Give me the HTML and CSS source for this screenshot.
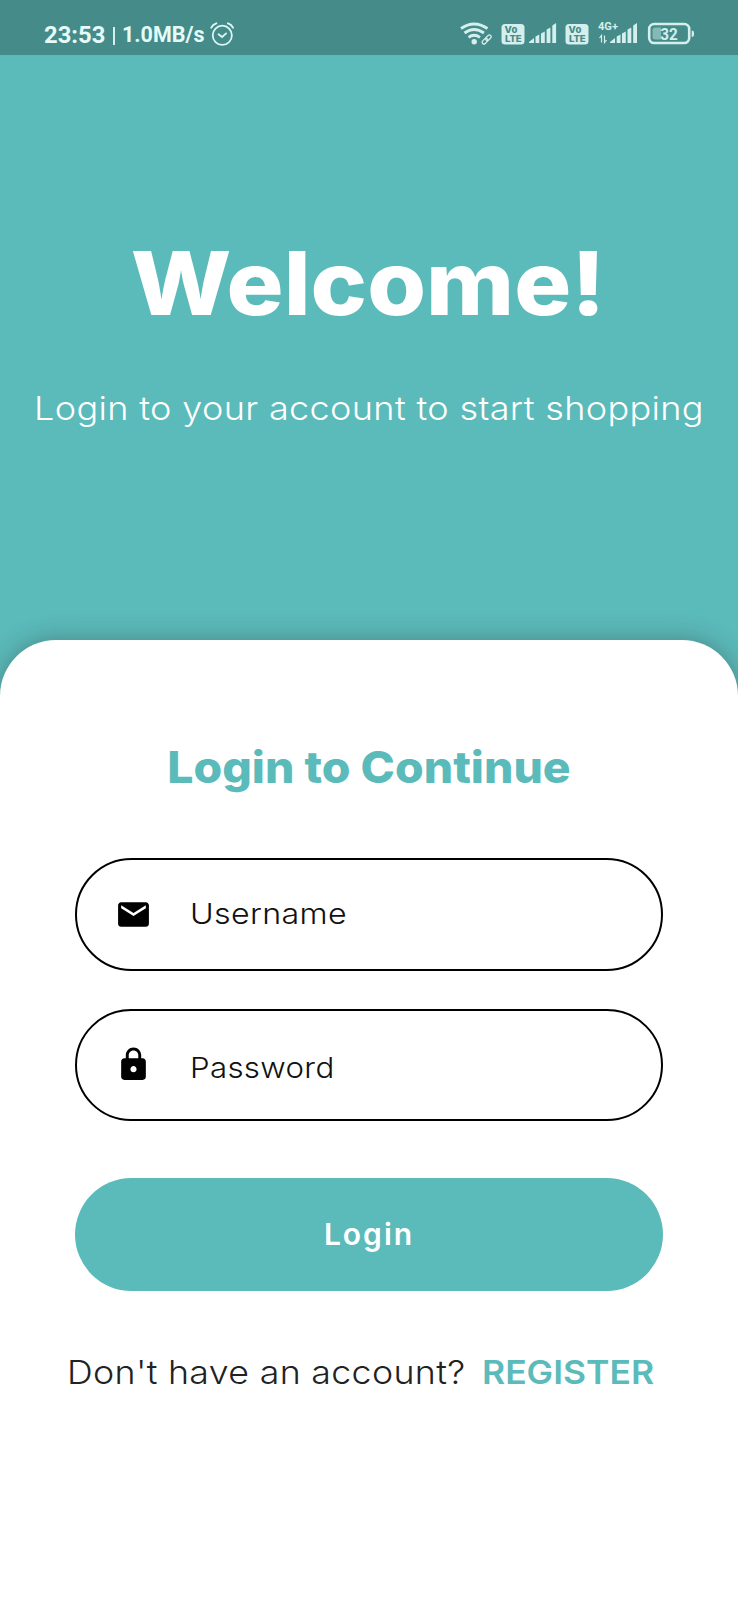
FILE: index.html
```html
<!DOCTYPE html>
<html lang="en">
<head>
<meta charset="utf-8">
<title>Login</title>
<link rel="stylesheet" href="styles.css">
</head>
<body>
<div class="status">
  <div class="status-left">
    <span class="clock">23:53</span><span class="divider"></span><span class="speed">1.0MB/s</span>
    <svg class="alarm" width="24" height="24" viewBox="210 22 24 24" fill="none" stroke="#dcf6f4" stroke-linecap="round">
      <circle cx="222.3" cy="35.3" r="9.6" stroke-width="1.8"/>
      <path d="M218.5 34.2l3.6 2.8 4-3.6" stroke-width="1.8"/>
      <path d="M211.3 27.600q1.500-3 5-4.200M233 27.600q-1.500-3-5-4.200" stroke-width="2"/>
    </svg>
  </div>
  <div class="status-right">
    <svg width="33" height="24" viewBox="460 22 33 24" fill="none" stroke="#d4efed">
      <path d="M461 28.500q13-9 26.500 0M464.500 33q9.500-7 19.500 0M468.500 37.300q5.500-4 11.500 0" stroke-width="2.800"/>
      <circle cx="474.200" cy="41.800" r="2.700" fill="#d4efed" stroke="none"/>
      <g transform="rotate(-45 486.500 39.500)" stroke-width="1.300"><rect x="481" y="37.800" width="6.500" height="3.600" rx="1.800"/><rect x="485.800" y="37.800" width="6.500" height="3.600" rx="1.800"/></g>
    </svg>
    <svg class="volte" width="24" height="22" viewBox="0 0 24 22">
      <rect x=".5" y="1" width="23" height="20.500" rx="3.500" fill="#d4efed"/>
      <text x="3.500" y="9.800" class="badge-text" textLength="13">Vo</text>
      <text x="4" y="18.800" class="badge-text" textLength="16.500">LTE</text>
    </svg>
    <svg class="bars-a" width="29" height="22" viewBox="528 22 29 22" fill="#d4efed">
      <path d="M529 43v-1l5-4v5zM535.500 36.500l3.800-2V43h-3.800zM541 33.500l3.800-2V43H541zM546.600 29.500l3.800-2V43h-3.800zM552.300 25.500l3.800-2.500v20h-3.800z"/>
    </svg>
    <svg class="volte-b" width="24" height="22" viewBox="0 0 24 22">
      <rect x=".5" y="1" width="23" height="20.500" rx="3.500" fill="#d4efed"/>
      <text x="3.500" y="9.800" class="badge-text" textLength="13">Vo</text>
      <text x="4" y="18.800" class="badge-text" textLength="16.500">LTE</text>
    </svg>
    <svg class="bars-b" width="41" height="24" viewBox="597 21 41 24" fill="#d4efed">
      <text x="598" y="30.300" class="net-text" textLength="20" lengthAdjust="spacingAndGlyphs">4G+</text>
      <path d="M601.500 42.500v-7l-2 2.500M604.500 35.500v7l2-2.500" fill="none" stroke="#d4efed" stroke-width="1.200"/>
      <path d="M610 43v-1l5-4v5zM616.700 36.500l3.800-2V43h-3.800zM622 33.500l3.800-2V43H622zM627.500 29.500l3.800-2V43h-3.800zM633.200 25.500l3.800-2.500v20h-3.800z"/>
    </svg>
    <svg class="battery" width="48" height="24" viewBox="647 22 48 24">
      <rect x="649.200" y="24" width="40" height="19" rx="5" fill="none" stroke="#d4efed" stroke-width="2.600"/>
      <path d="M655 27.500h6v12h-6q-2.500 0-2.500-2.500v-7q0-2.500 2.500-2.500z" fill="#83bab7"/>
      <path d="M691.700 30.500q2.300 0 2.300 2v2.500q0 2-2.300 2z" fill="#d4efed"/>
      <text x="660.300" y="40" class="battery-text" textLength="17.500" lengthAdjust="spacingAndGlyphs">32</text>
    </svg>
  </div>
</div>
<header class="hero">
  <h1 class="welcome">Welcome!</h1>
  <p class="subtitle">Login to your account to start shopping</p>
</header>
<main class="sheet">
  <h2 class="title">Login to Continue</h2>
  <div class="field">
    <svg class="icon" width="37" height="37" viewBox="0 0 24 24"><path d="M20 4H4c-1.100 0-2 .9-2 2v12c0 1.100.9 2 2 2h16c1.100 0 2-.9 2-2V6c0-1.100-.9-2-2-2zm0 4l-8 5-8-5V6l8 5 8-5v2z"/></svg>
    <span class="label user">Username</span>
  </div>
  <div class="field">
    <svg class="icon lock" width="37" height="37" viewBox="0 0 24 24"><path d="M18 8h-1V6c0-2.760-2.240-5-5-5S7 3.240 7 6v2H6c-1.100 0-2 .9-2 2v10c0 1.100.9 2 2 2h12c1.100 0 2-.9 2-2V10c0-1.100-.9-2-2-2zm-6 9c-1.100 0-2-.9-2-2s.9-2 2-2 2 .9 2 2-.9 2-2 2zM8.900 8V6c0-1.710 1.390-3.100 3.100-3.100s3.100 1.390 3.100 3.100v2H8.900z"/></svg>
    <span class="label pass">Password</span>
  </div>
  <button class="login">Login</button>
  <p class="footer"><span class="question">Don't have an account?</span><a class="register">REGISTER</a></p>
</main>
</body>
</html>
```
FILE: styles.css
```css
* { box-sizing: border-box; }
body {
  margin: 0;
  width: 738px;
  height: 1600px;
  overflow: hidden;
  display: flex;
  flex-direction: column;
  background: #5bbaba;
  font-family: Inter, "Open Sans", sans-serif;
}
h1, h2, p { margin: 0; white-space: nowrap; }
svg { display: block; flex: none; }

.status {
  height: 55px;
  flex: none;
  background: #448b89;
  color: #e4fbf8;
  display: flex;
  justify-content: space-between;
  padding: 0 43px 0 44px;
  font-family: Roboto, sans-serif;
  font-weight: 700;
}
.status-left, .status-right { display: flex; align-items: flex-start; }
.clock { font-size: 23.800px; line-height: 28px; margin-top: 21px; width: 61px; }
.divider { width: 2px; height: 18px; margin: 27px 7px 0 8px; background: #d4efed; }
.speed { font-size: 21.500px; line-height: 28px; margin-top: 21px; width: 82px; }
.alarm { margin: 22px 0 0 6px; }
.status-right { padding-top: 22px; }
.volte { margin: 1px 0 0 8px; }
.bars-a { margin-left: 3px; }
.volte-b { margin: 1px 0 0 8px; }
.bars-b { margin: -1px 0 0 8px; }
.battery { margin-left: 9px; }
.badge-text { font: 800 9.500px Inter, sans-serif; fill: #448b89; }
.net-text { font: 700 10px Roboto, sans-serif; }
.battery-text { font: 700 16.500px Roboto, sans-serif; fill: #d4efed; }

.hero {
  height: 585px;
  flex: none;
  padding-top: 183px;
  color: #fff;
  text-align: center;
}
.welcome { font-size: 88px; line-height: 90px; font-weight: 800; transform: translateX(-1px) scaleX(1.08); }
.subtitle { margin-top: 60px; font-size: 33px; line-height: 40px; font-weight: 300; letter-spacing: .3px; transform: scaleX(1.093); }

.sheet {
  flex: 1;
  background: #fff;
  border-radius: 56px 56px 0 0;
  box-shadow: 0 0 24px rgba(50, 60, 60, .42);
  padding: 102px 75px 0;
  display: flex;
  flex-direction: column;
}
.title { font-size: 44px; line-height: 50px; font-weight: 800; color: #5bbaba; text-align: center; margin-bottom: 66px; transform: scaleX(1.053); }
.field {
  height: 113px;
  flex: none;
  border: 2px solid #000;
  border-radius: 57px;
  margin-bottom: 38px;
  padding-left: 38px;
  display: flex;
  align-items: center;
}
.field + .field { height: 112px; }
.lock { margin-top: -1px; }
.label { margin-left: 38px; font-size: 29px; line-height: 36px; font-weight: 300; color: #111; letter-spacing: .3px; transform-origin: left; }
.user { margin-top: -2px; transform: scaleX(1.11); }
.pass { margin-top: 6px; transform: scaleX(1.077); }
.login {
  height: 113px;
  flex: none;
  margin-top: 19px;
  padding-bottom: 3px;
  border: 0;
  border-radius: 57px;
  background: #5bbaba;
  color: #fff;
  font: 600 30px Inter, sans-serif;
  letter-spacing: 2px;
}
.footer { margin: 61px 0 0 -8px; font-size: 33px; line-height: 40px; display: flex; }
.question { width: 415px; flex: none; font-weight: 300; color: #222; letter-spacing: .3px; transform: scaleX(1.083); transform-origin: left; }
.register { font-weight: 600; color: #5bbaba; transform: scaleX(1.075); transform-origin: left; }
```
